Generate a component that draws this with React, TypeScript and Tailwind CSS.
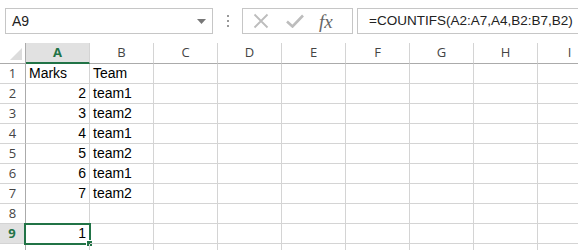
import React from 'react';

const cols = ['A', 'B', 'C', 'D', 'E', 'F', 'G', 'H', 'I'];
const data: Record<number, [string, string]> = {
  1: ['Marks', 'Team'],
  2: ['2', 'team1'],
  3: ['3', 'team2'],
  4: ['4', 'team1'],
  5: ['5', 'team2'],
  6: ['6', 'team1'],
  7: ['7', 'team2'],
  8: ['', ''],
  9: ['1', ''],
};

const App: React.FC = () => {
  const rows = [1, 2, 3, 4, 5, 6, 7, 8, 9, 10];

  return (
    <div className="w-[578px] h-[250px] overflow-hidden bg-white relative" style={{ fontFamily: '"Liberation Sans", Arial, sans-serif' }}>
      {/* Formula bar */}
      <div className="h-[43px] flex items-start pt-[8px] pl-[5px]">
        <div className="w-[208px] h-[26px] shrink-0 border border-[#c6c6c6] flex items-center justify-between pl-[6px] pr-[6px] text-[14px] text-[#222]">
          <span>A9</span>
          <svg width="9" height="5" viewBox="0 0 9 5"><path d="M0 0h9L4.5 5z" fill="#777" /></svg>
        </div>
        <div className="w-[29px] h-[26px] shrink-0 flex flex-col items-center justify-center gap-[3px]">
          <span className="w-[2px] h-[2px] bg-[#999]" />
          <span className="w-[2px] h-[2px] bg-[#999]" />
          <span className="w-[2px] h-[2px] bg-[#999]" />
        </div>
        <div className="w-[111px] h-[26px] shrink-0 border border-[#c6c6c6] flex items-center pl-[10px]">
          <svg width="16" height="16" viewBox="0 0 16 16" className="mr-[17px]">
            <path d="M1.5 1.5L14.5 14.5M14.5 1.5L1.5 14.5" stroke="#bdbdbd" strokeWidth="1.8" />
          </svg>
          <svg width="18" height="14" viewBox="0 0 18 14" className="mr-[15px]">
            <path d="M1 7.5L6.5 12.5L17 1.5" stroke="#bdbdbd" strokeWidth="2.6" fill="none" />
          </svg>
          <span className="text-[19px] italic text-[#666] leading-none" style={{ fontFamily: '"Liberation Serif", "Times New Roman", serif' }}>fx</span>
        </div>
        <div className="w-[260px] h-[26px] shrink-0 ml-[4px] border border-[#c6c6c6] flex items-center pl-[11px] text-[13.5px] text-[#222] whitespace-nowrap">
          =COUNTIFS(A2:A7,A4,B2:B7,B2)
        </div>
      </div>

      {/* Grid */}
      <div className="grid grid-cols-[26px_repeat(9,64px)]">
        {/* Header row */}
        <div className="h-[21px] border-b border-r border-[#ababab] relative">
          <svg width="12" height="12" viewBox="0 0 12 12" className="absolute right-[3px] bottom-[3px]">
            <path d="M12 0V12H0z" fill="#dcdcdc" />
          </svg>
        </div>
        {cols.map((c) => (
          <div
            key={c}
            className={
              c === 'A'
                ? 'h-[21px] bg-[#e1e1e1] border-b-2 border-[#217346] border-r border-r-[#d4d4d4] flex items-center justify-center text-[13px] font-bold text-[#217346]'
                : 'h-[21px] border-b border-[#ababab] border-r border-r-[#d4d4d4] flex items-center justify-center text-[13px] text-[#444]'
            }
            style={{ fontFamily: '"Open Sans", "Noto Sans", sans-serif' }}
          >
            {c}
          </div>
        ))}

        {rows.map((r) => (
          <React.Fragment key={r}>
            <div
              className={
                r === 9
                  ? 'h-[20px] bg-[#e1e1e1] border-b border-[#d4d4d4] border-r-2 border-r-[#217346] flex items-center justify-center text-[13px] font-bold text-[#217346]'
                  : 'h-[20px] border-b border-[#d4d4d4] border-r border-r-[#ababab] flex items-center justify-center text-[13px] text-[#444]'
              }
              style={{ fontFamily: '"Open Sans", "Noto Sans", sans-serif' }}
            >
              {r < 10 ? r : ''}
            </div>
            {cols.map((c, i) => {
              const val = data[r]?.[i] ?? '';
              const numeric = val !== '' && !isNaN(Number(val));
              return (
                <div
                  key={c}
                  className={`h-[20px] border-b border-r border-[#d4d4d4] flex items-center text-[14px] text-black px-[3px] relative ${numeric ? 'justify-end' : 'justify-start'}`}
                >
                  {val}
                  {r === 9 && c === 'A' && (
                    <div className="absolute -left-[2px] -top-[1px] w-[67px] h-[22px] border-2 border-[#217346]">
                      <div className="absolute -right-[4px] -bottom-[4px] w-[7px] h-[7px] bg-[#217346] border border-white" />
                    </div>
                  )}
                </div>
              );
            })}
          </React.Fragment>
        ))}
      </div>
    </div>
  );
};

export default App;
